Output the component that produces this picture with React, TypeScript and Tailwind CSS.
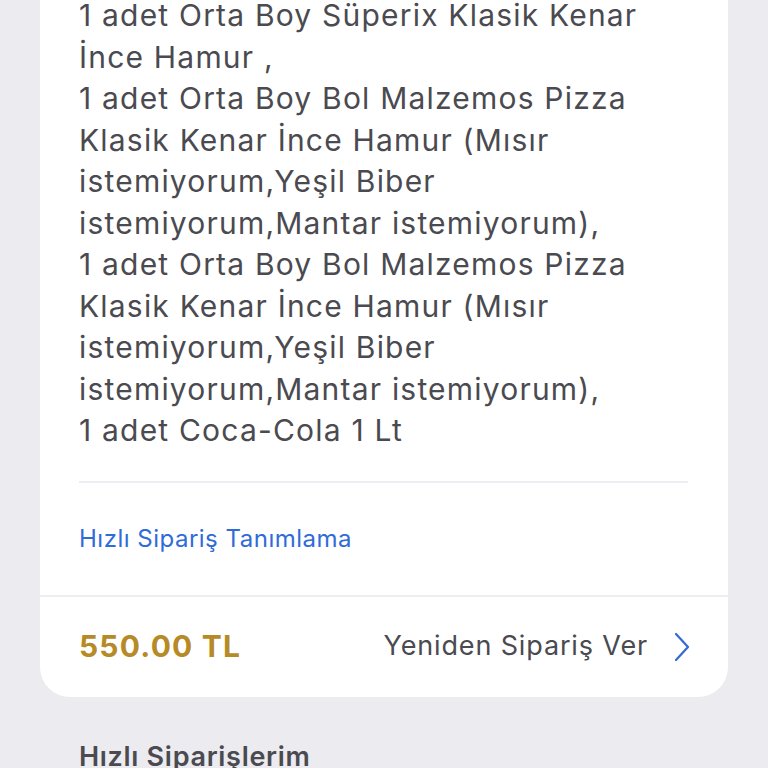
const lines = [
  '1 adet Orta Boy Süperix Klasik Kenar',
  'İnce Hamur ,',
  '1 adet Orta Boy Bol Malzemos Pizza',
  'Klasik Kenar İnce Hamur (Mısır',
  'istemiyorum,Yeşil Biber',
  'istemiyorum,Mantar istemiyorum),',
  '1 adet Orta Boy Bol Malzemos Pizza',
  'Klasik Kenar İnce Hamur (Mısır',
  'istemiyorum,Yeşil Biber',
  'istemiyorum,Mantar istemiyorum),',
  '1 adet Coca-Cola 1 Lt',
];

export default function App() {
  return (
    <div
      className="h-[768px] w-[768px] overflow-hidden bg-[#ebebf0]"
      style={{ fontFamily: 'Inter, "Open Sans", sans-serif' }}
    >
      <div className="-mt-[5px] mx-[40px] rounded-b-[30px] bg-white">
        <div className="px-[39px] pb-[29px] text-[30px] leading-[41.5px] tracking-[1.2px] text-[#4a4a50]">
          {lines.map((l, i) => (
            <div key={i} className="whitespace-nowrap">
              {l}
            </div>
          ))}
        </div>
        <div className="ml-[39px] mr-[40px] h-[2px] bg-[#eeeef2]" />
        <div className="flex h-[112px] items-center px-[39px] text-[24px] tracking-[0.5px] text-[#2f6bd9]">
          Hızlı Sipariş Tanımlama
        </div>
        <div className="h-[2px] bg-[#eeeef2]" />
        <div className="flex h-[100px] items-center justify-between pl-[39px] pr-[38px]">
          <span className="text-[30px] font-bold tracking-[1.2px] text-[#b78a28]">550.00 TL</span>
          <span className="flex items-center gap-[26px] text-[27px] tracking-[0.85px] text-[#4a4a50]">
            Yeniden Sipariş Ver
            <svg width="16" height="30" viewBox="0 0 16 30" fill="none">
              <path d="M2 2 L14 15 L2 28" stroke="#3468d6" strokeWidth="2.2" strokeLinecap="round" strokeLinejoin="round" />
            </svg>
          </span>
        </div>
      </div>
      <div className="mt-[40px] px-[79px] text-[27px] font-semibold tracking-[0.7px] text-[#4a4a50]">
        Hızlı Siparişlerim
      </div>
    </div>
  );
}
